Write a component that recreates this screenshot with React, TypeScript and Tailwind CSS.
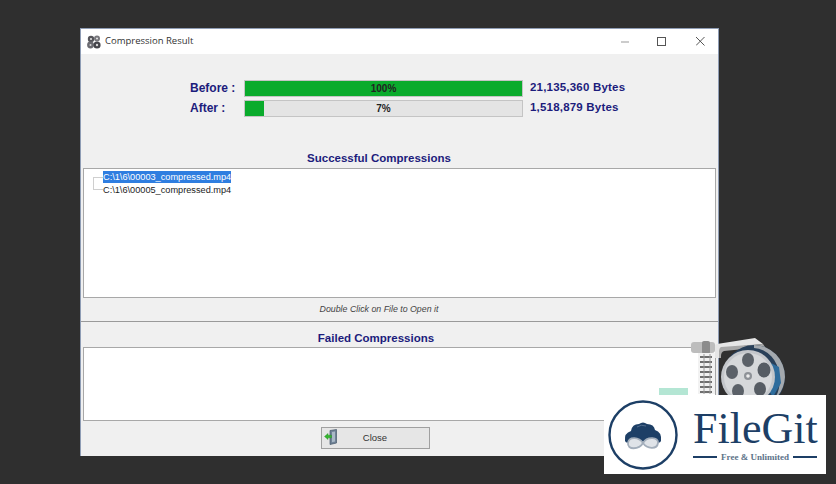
import React from 'react';

function AppIcon() {
  return (
    <svg width="16" height="16" viewBox="0 0 16 16">
      <circle cx="5" cy="5" r="3.2" fill="#55555a" />
      <circle cx="11" cy="4.5" r="3" fill="#77777c" />
      <circle cx="4.5" cy="11" r="3.4" fill="#6a6a70" />
      <circle cx="11" cy="11" r="3.6" fill="#44444a" />
      <circle cx="5" cy="5" r="1" fill="#e8e8e8" />
      <circle cx="11" cy="4.5" r="1" fill="#e8e8e8" />
      <circle cx="4.5" cy="11" r="1" fill="#d8d8d8" />
      <circle cx="11" cy="11" r="1.2" fill="#d8d8d8" />
    </svg>
  );
}

function DoorIcon() {
  return (
    <svg width="14" height="16" viewBox="0 0 14 16">
      <path d="M6 1.5 L12.5 0.5 V14 L6 15.5 Z" fill="#6f8296" stroke="#46586a" strokeWidth="0.7" />
      <path d="M8 3 L11 2.5 V12.5 L8 13.2 Z" fill="#a9b8c6" />
      <path d="M0.5 7.5 L4 4.5 V6.2 H7.5 V8.8 H4 V10.5 Z" fill="#35b52e" stroke="#1f8a1e" strokeWidth="0.4" />
    </svg>
  );
}

function ReelIcon() {
  return (
    <svg width="96" height="60" viewBox="0 0 96 60">
      {/* zipper */}
      <path d="M24 9 L26 8 L64 2 L72 8 L32 12 Q28 13 28 18 V22 H24 Z" fill="#e6e6e6" />
      <path d="M30 11 L72 8 L74 11 L33 15 Q30 16 30 20 V22 H28 V16 Q28 12 30 11 Z" fill="#a8a8a8" />
      <rect x="0" y="6" width="24" height="11" rx="3" fill="#bdbdbd" />
      <rect x="11" y="5" width="8" height="13" rx="2" fill="#8c8c8c" />
      <rect x="7" y="17" width="17" height="41" fill="#f2f2f2" />
      <path d="M9 21 H21 M9 26 H21 M9 31 H21 M9 36 H21 M9 41 H21 M9 46 H21 M9 51 H21 M9 56 H21" stroke="#6e6e6e" strokeWidth="1.8" />
      <path d="M13 18 V58 M19 18 V58" stroke="#9a9a9a" strokeWidth="1" />
      {/* reel */}
      <ellipse cx="63" cy="41" rx="31" ry="32" fill="#283f58" />
      <path d="M63 9 A31 32 0 0 1 94 41 A31 32 0 0 1 80 66 L84 62 A27 30 0 0 0 88 39 A27 28 0 0 0 63 12 Z" fill="#a4a9ae" />
      <path d="M80 27 L88 31 L90 47 L82 61 L78 55 L84 41 Z" fill="#2e6c9c" />
      <circle cx="57" cy="41" r="27" fill="#c3c6ca" />
      <circle cx="57" cy="41" r="24" fill="#d6d8da" />
      <ellipse cx="57" cy="24" rx="6" ry="7" fill="#5b6168" />
      <ellipse cx="73" cy="34" rx="6.5" ry="7.5" fill="#565c63" />
      <ellipse cx="41" cy="36" rx="6" ry="7" fill="#5b6168" />
      <ellipse cx="69" cy="53" rx="6" ry="7" fill="#565c63" />
      <ellipse cx="47" cy="55" rx="6" ry="7" fill="#5b6168" />
      <circle cx="57" cy="40" r="4" fill="#8e9297" />
      <circle cx="57" cy="40" r="1.8" fill="#eeeeee" />
    </svg>
  );
}

function CloudLogo() {
  return (
    <svg width="72" height="72" viewBox="0 0 72 72">
      <circle cx="36" cy="36" r="33.5" fill="none" stroke="#1d3f66" strokeWidth="2.4" />
      <path d="M18 42 Q17 34 24 32 Q25 25 32 25 Q36 22 40 25 Q47 25 48 31 Q55 33 54 42 Q53 45 48 43 H24 Q19 45 18 42 Z" fill="#1d3f66" />
      <path d="M36 44 C32 38 22 37 21 44 C20 51 32 51 36 44 C40 37 52 38 51 44 C50 51 40 50 36 44 Z" fill="#dfe3e8" stroke="#a3aebb" strokeWidth="1.8" />
      <path d="M30 28 Q34 25 39 27" fill="none" stroke="#5f7a99" strokeWidth="0.8" />
    </svg>
  );
}

function StatRow({ label, pct, width, bytes }: { label: string; pct: string; width: string; bytes: string }) {
  return (
    <div className="flex items-center h-[16px]">
      <span className="w-[54px] text-[12px] font-bold text-[#1c1c7c] whitespace-nowrap">{label}</span>
      <div className="relative w-[279px] h-[17px] bg-[#e4e4e4] border border-[#c4c4c4]">
        <div className={`h-full bg-[#0aab2c] ${width}`} />
        <span className="absolute inset-0 flex items-center justify-center text-[10px] font-bold text-[#222]">{pct}</span>
      </div>
      <span className="ml-[7px] text-[11.5px] font-bold text-[#1c1c7c] tracking-[0.2px] whitespace-nowrap">{bytes}</span>
    </div>
  );
}

export default function App() {
  return (
    <div className="relative w-[836px] h-[484px] overflow-hidden bg-[#2f2f2f] pt-[28px] pl-[80px] font-['Liberation_Sans',sans-serif]">
      <div className="flex flex-col w-[639px] h-[428px] bg-[#f0f0f0] border-x border-t border-[#8f9db5]">
        {/* title bar */}
        <div className="flex items-center h-[25px] bg-white shrink-0">
          <div className="ml-[5px]"><AppIcon /></div>
          <span className="ml-[3px] text-[9.5px] font-['Open_Sans',sans-serif] text-[#333]">Compression Result</span>
          <div className="ml-auto flex items-center">
            <svg width="36" height="14" viewBox="0 0 36 14">
              <path d="M0 7 H8" stroke="#999" strokeWidth="1" />
            </svg>
            <svg width="39" height="14" viewBox="0 0 39 14">
              <rect x="0.5" y="2.5" width="8" height="8" fill="none" stroke="#555" strokeWidth="1" />
            </svg>
            <svg width="22" height="14" viewBox="0 0 22 14">
              <path d="M0 2 L8.5 10.5 M8.5 2 L0 10.5" stroke="#555" strokeWidth="1" />
            </svg>
          </div>
        </div>

        {/* stats */}
        <div className="flex flex-col gap-[4px] pt-[26px] pl-[109px]">
          <StatRow label="Before :" pct="100%" width="w-full" bytes="21,135,360 Bytes" />
          <StatRow label="After :" pct="7%" width="w-[7%]" bytes="1,518,879 Bytes" />
        </div>

        {/* successful list */}
        <div className="mt-[35px] pr-[41px] text-center text-[11.5px] font-bold text-[#1c1c7c] leading-[14px]">Successful Compressions</div>
        <div className="relative mx-[2px] mt-[3px] h-[130px] bg-white border border-[#a8a8a8] pt-[2px] pl-[19px]">
          <div className="absolute left-[9px] top-[8px] w-[10px] h-[13px] border-l border-t border-b border-[#cfcfcf]" />
          <div className="relative text-[9.2px] leading-[13px] text-[#222]">
            <div><span className="bg-[#2f7ee0] text-white py-[1px]">C:\1\6\00003_compressed.mp4</span></div>
            <div>C:\1\6\00005_compressed.mp4</div>
          </div>
        </div>

        <div className="mt-[5px] h-[18px] pr-[41px] text-center text-[8.8px] italic text-[#444] leading-[12px]">Double Click on File to Open it</div>
        <div className="h-[1px] bg-[#9a9a9a]" />

        {/* failed list */}
        <div className="mt-[9px] pr-[47px] text-center text-[11.5px] font-bold text-[#1c1c7c] leading-[14px]">Failed Compressions</div>
        <div className="mx-[2px] mt-[2px] h-[74px] bg-white border border-[#a8a8a8]" />

        {/* close button */}
        <div className="flex justify-center mt-[6px] pr-[49px]">
          <button className="relative flex items-center justify-center w-[109px] h-[22px] bg-[#e6e6e6] border border-[#a0a0a0] text-[9.5px] text-[#333]">
            <span className="absolute left-[2px] top-[1px]"><DoorIcon /></span>
            Close
          </button>
        </div>
      </div>

      {/* watermark overlays */}
      <div className="absolute left-[691px] top-[336px]"><ReelIcon /></div>
      <div className="absolute left-[659px] top-[388px] w-[29px] h-[8px] bg-[#b4e6d4]" />
      <div className="absolute left-[604px] top-[395px] w-[222px] h-[79px] bg-white flex items-center">
        <div className="ml-[3px]"><CloudLogo /></div>
        <div className="ml-[14px] flex flex-col font-['Liberation_Serif',serif] text-[#1d3f66]">
          <span className="text-[44px] leading-[44px]">FileGit</span>
          <div className="flex items-center justify-between w-[124px] mt-[1px]">
            <div className="w-[24px] h-[2px] bg-[#1d3f66]" />
            <span className="text-[9px] leading-[10px] font-bold text-[#5d7389] whitespace-nowrap">Free &amp; Unlimited</span>
            <div className="w-[24px] h-[2px] bg-[#1d3f66]" />
          </div>
        </div>
      </div>
    </div>
  );
}
